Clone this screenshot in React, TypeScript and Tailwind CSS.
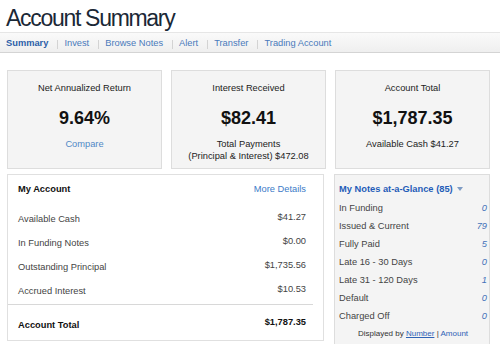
const navItems = ['Invest', 'Browse Notes', 'Alert', 'Transfer', 'Trading Account']

const accountRows = [
  { label: 'Available Cash', value: '$41.27' },
  { label: 'In Funding Notes', value: '$0.00' },
  { label: 'Outstanding Principal', value: '$1,735.56' },
  { label: 'Accrued Interest', value: '$10.53' },
]

const noteRows = [
  { label: 'In Funding', count: '0' },
  { label: 'Issued & Current', count: '79' },
  { label: 'Fully Paid', count: '5' },
  { label: 'Late 16 - 30 Days', count: '0' },
  { label: 'Late 31 - 120 Days', count: '1' },
  { label: 'Default', count: '0' },
  { label: 'Charged Off', count: '0' },
]

function StatCard({ title, value, children }: { title: string; value: string; children: React.ReactNode }) {
  return (
    <div className="w-[155px] h-[99px] bg-[#f4f4f4] border border-[#dddddd] flex flex-col items-center pt-[11px]">
      <p className="leading-[12px] text-[#222]">{title}</p>
      <p className="mt-[14px] text-[18px] leading-[20px] font-bold text-[#111]">{value}</p>
      <div className="mt-[10px] flex flex-col items-center leading-[12px] text-[#222]">{children}</div>
    </div>
  )
}

export default function App() {
  return (
    <div className="w-[500px] h-[344px] overflow-hidden bg-white text-[9.3px] font-['Liberation_Sans',Arial,sans-serif]">
      <h1 className="pl-[6px] pt-[5px] text-[23px] leading-[26px] tracking-[-1.3px] text-[#1b2836]">
        Account Summary
      </h1>

      {/* nav */}
      <nav className="mt-[1px] h-[21px] flex items-center pl-[6px] pt-[3px] border-t border-[#e6e6e6] border-b border-b-[#d4d4d4] bg-gradient-to-b from-[#fafafa] to-[#efefef]">
        <span className="font-bold text-[#2c5fa8]">Summary</span>
        {navItems.map((item) => (
          <span key={item} className="flex items-center">
            <span className="w-px h-[9px] bg-[#d3d3d3] ml-[9px] mr-[6px]" />
            <span className="text-[#4a7abb]">{item}</span>
          </span>
        ))}
      </nav>

      {/* stats */}
      <div className="mt-[17px] pl-[7px] flex gap-[9px]">
        <StatCard title="Net Annualized Return" value="9.64%">
          <span className="text-[#5088c6]">Compare</span>
        </StatCard>
        <StatCard title="Interest Received" value="$82.41">
          <span>Total Payments</span>
          <span>(Principal &amp; Interest) $472.08</span>
        </StatCard>
        <StatCard title="Account Total" value="$1,787.35">
          <span>Available Cash $41.27</span>
        </StatCard>
      </div>

      <div className="mt-[5px] pl-[7px] flex gap-[10px] items-start">
        {/* My Account */}
        <div className="w-[317px] h-[167px] bg-white border border-[#e0e0e0] pt-[8px]">
          <div className="flex justify-between pl-[10px] pr-[17px] leading-[12px]">
            <span className="font-bold text-[#111]">My Account</span>
            <span className="text-[#3b7bc8]">More Details</span>
          </div>
          <div className="mt-[12px]">
            {accountRows.map((row) => (
              <div key={row.label} className="h-[24px] flex justify-between pl-[10px] pr-[17px] text-[#444]">
                <span className="pt-[6px] leading-[12px]">{row.label}</span>
                <span className="pt-[4px] leading-[12px]">{row.value}</span>
              </div>
            ))}
          </div>
          <div className="mt-[1px] mr-[10px] h-px bg-[#d8d8d8]" />
          <div className="mt-[8px] h-[24px] flex justify-between pl-[10px] pr-[17px] font-bold text-[#111]">
            <span className="pt-[6px] leading-[12px]">Account Total</span>
            <span className="pt-[3px] leading-[12px]">$1,787.35</span>
          </div>
        </div>

        {/* My Notes */}
        <div className="w-[156px] h-[172px] bg-[#f4f4f4] border border-[#dddddd] pt-[8px] pl-[4px] pr-[2px]">
          <div className="flex items-center gap-[4px] leading-[12px] font-bold text-[#1f5cb8]">
            <span>My Notes at-a-Glance (85)</span>
            <svg width="6" height="4" viewBox="0 0 6 4">
              <path d="M0 0h6L3 4z" fill="#7f9cc4" />
            </svg>
          </div>
          <div className="mt-[5px]">
            {noteRows.map((row) => (
              <div key={row.label} className="h-[18px] flex items-center justify-between text-[#444]">
                <span>{row.label}</span>
                <span className="italic text-[#4472b9]">{row.count}</span>
              </div>
            ))}
          </div>
          <p className="mt-[2px] leading-[12px] text-center text-[8px] text-[#333]">
            Displayed by <span className="underline text-[#2f63b6]">Number</span> | <span className="text-[#2f63b6]">Amount</span>
          </p>
        </div>
      </div>
    </div>
  )
}
